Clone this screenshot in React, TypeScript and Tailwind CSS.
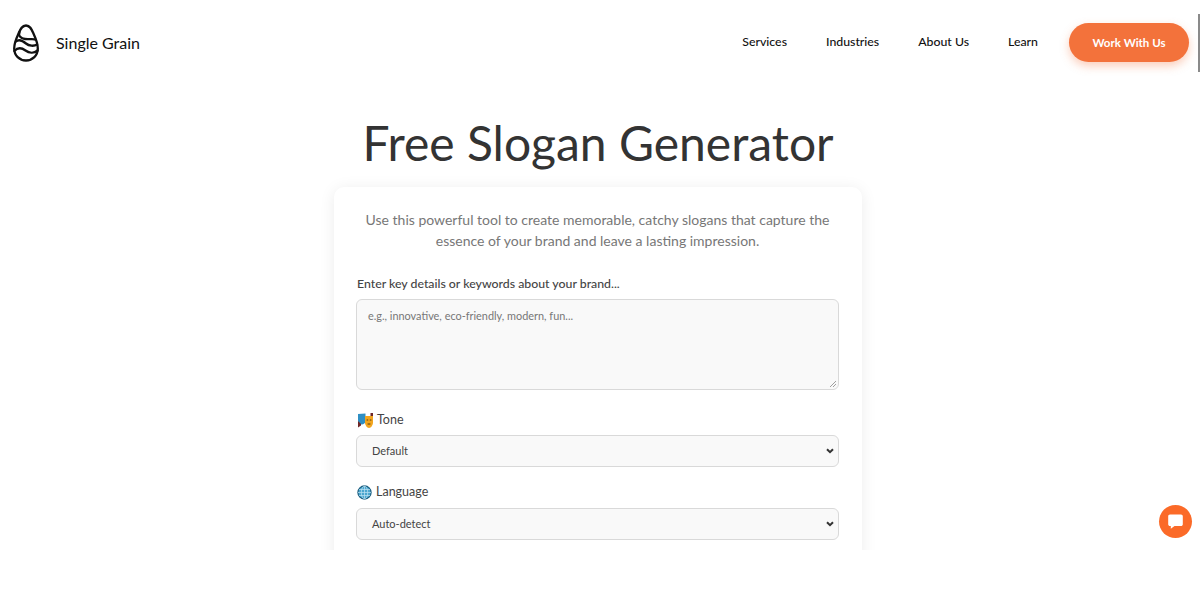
import React from 'react';

const font = "font-['Lato','Liberation_Sans',sans-serif]";

function Logo() {
  return (
    <svg width="26" height="38" viewBox="0 0 26 38" fill="none" stroke="#111" strokeWidth="2.3" strokeLinecap="round" strokeLinejoin="round">
      <path d="M13 1.5C9 1.5 7.5 5 6 8.5C4 13 1.2 18 1.2 24.5C1.2 31.5 6.5 36.5 13 36.5C19.5 36.5 24.8 31.5 24.8 24.5C24.8 18 22 13 20 8.5C18.5 5 17 1.5 13 1.5Z" />
      <path d="M6.5 8C5 12 8 14.5 12 15C16 15.5 20.5 14.5 22 15.5" />
      <path d="M3 17.5C6.5 14.5 10 17 13 19.5C16 22 21 22.5 24 20.5" />
      <path d="M1.4 27C5 23 9 24 12.5 26.5C16 29 21 29.5 24.6 26.5" />
    </svg>
  );
}

function ToneIcon() {
  return (
    <svg width="15" height="15" viewBox="0 0 15 15">
      <path d="M0 1L7.5 0.5V8C7.5 10 5.5 11.5 3.8 11.5C2 11.5 0 10 0 8Z" fill="#2f8fc4" />
      <path d="M0 8L0 14.5L3 12.5L3 11Z" fill="#6e2626" />
      <path d="M7 3H15V9.5C15 12 13 15 11 15C9 15 7 12 7 9.5Z" fill="#f2a51e" />
      <path d="M12.5 0L15 0V3H12.5Z" fill="#6e2626" />
      <path d="M8.6 7H10.2M11.8 7H13.4M9.6 11H12.4" stroke="#5a3a0a" strokeWidth="1" />
    </svg>
  );
}

function GlobeIcon() {
  return (
    <svg width="15" height="15" viewBox="0 0 15 15" fill="none">
      <circle cx="7.5" cy="7.5" r="6.6" fill="#4ba6cf" stroke="#1d5f80" strokeWidth="1.2" />
      <path d="M1 7.5H14M2 4.5H13M2 10.5H13M7.5 1V14" stroke="#bfe3f2" strokeWidth="0.7" />
      <ellipse cx="7.5" cy="7.5" rx="3.2" ry="6.4" stroke="#bfe3f2" strokeWidth="0.7" />
    </svg>
  );
}

function Chevron() {
  return (
    <svg width="8" height="6" viewBox="0 0 8 6" fill="none" stroke="#333" strokeWidth="2">
      <path d="M1 1.2L4 4.2L7 1.2" />
    </svg>
  );
}

function SelectBox({ value }: { value: string }) {
  return (
    <div className="flex h-[32px] items-center justify-between rounded-[6px] border border-[#d9d9d9] bg-[#f9f9f9] pl-[15px] pr-[4px] text-[11px] text-[#444]">
      <span>{value}</span>
      <Chevron />
    </div>
  );
}

export default function App() {
  return (
    <div className={`h-[610px] w-[1200px] overflow-hidden bg-white ${font}`}>
      <div className="relative flex h-[550px] overflow-hidden bg-white">
        <div className="w-[1196px] shrink-0">
          <header className="flex h-[85px] items-center justify-between pl-[13px] pr-[7px]">
            <div className="flex items-center gap-[17px]">
              <Logo />
              <span className="text-[16px] text-[#111]">Single Grain</span>
            </div>
            <nav className="flex items-center">
              <a className="mr-[39px] text-[12.3px] font-medium text-[#111]">Services</a>
              <a className="mr-[39px] text-[12.3px] font-medium text-[#111]">Industries</a>
              <a className="mr-[39px] text-[12.3px] font-medium text-[#111]">About Us</a>
              <a className="mr-[31px] text-[12.3px] font-medium text-[#111]">Learn</a>
              <button className="h-[39px] w-[120px] rounded-full bg-[#f3723b] text-[11.5px] font-bold text-white shadow-[0_4px_10px_rgba(243,114,59,0.35)]">
                Work With Us
              </button>
            </nav>
          </header>

          <main className="flex flex-col items-center">
            <h1 className="mt-[31px] text-[48px] leading-[54px] text-[#333]">Free Slogan Generator</h1>
            <div className="mt-[17px] w-[528px] rounded-t-[10px] bg-white pl-[22px] pr-[23px] pt-[22px] shadow-[0_2px_16px_rgba(0,0,0,0.08)]">
              <p className="text-center text-[14px] leading-[21px] text-[#777]">
                Use this powerful tool to create memorable, catchy slogans that capture the essence of your brand and leave a lasting impression.
              </p>
              <label className="mt-[24px] block pl-[1px] text-[12.3px] leading-[18px] font-medium text-[#444]">
                Enter key details or keywords about your brand...
              </label>
              <div className="relative mt-[6px] h-[91px] rounded-[6px] border border-[#d9d9d9] bg-[#f9f9f9] px-[11px] py-[8px] text-[10.9px] text-[#777]">
                e.g., innovative, eco-friendly, modern, fun...
                <svg className="absolute bottom-[1px] right-[1px]" width="8" height="8" viewBox="0 0 8 8" stroke="#888" strokeWidth="0.8">
                  <path d="M1 7L7 1M4 7L7 4" />
                </svg>
              </div>
              <div className="mt-[20px] flex items-center gap-[4px] pl-[2px] text-[12.5px] leading-[20px] text-[#444]">
                <ToneIcon />
                <span>Tone</span>
              </div>
              <div className="mt-[5px]">
                <SelectBox value="Default" />
              </div>
              <div className="mt-[15px] flex items-center gap-[4px] pl-[1px] text-[12.5px] leading-[20px] text-[#444]">
                <GlobeIcon />
                <span>Language</span>
              </div>
              <div className="mt-[6px]">
                <SelectBox value="Auto-detect" />
              </div>
              <div className="h-[40px]" />
            </div>
          </main>
        </div>

        <div className="flex-1 pt-[14px] pl-[2px]">
          <div className="h-[58px] w-[2px] bg-[#8a8a8a]" />
        </div>

        <button className="absolute left-[1159px] top-[505px] flex h-[33px] w-[33px] items-center justify-center rounded-full bg-[#fb6a28]">
          <svg width="19" height="19" viewBox="0 0 19 19" fill="white">
            <path d="M4 2.5H15C16 2.5 16.8 3.3 16.8 4.3V12.2C16.8 13.2 16 14 15 14H8.5L4.8 16.8V14H4C3 14 2.2 13.2 2.2 12.2V4.3C2.2 3.3 3 2.5 4 2.5Z" />
          </svg>
        </button>
      </div>
    </div>
  );
}
